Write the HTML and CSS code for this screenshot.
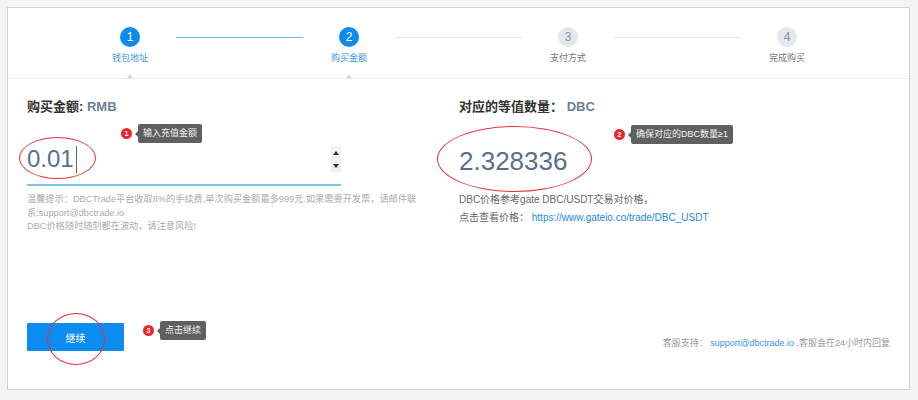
FILE: index.html
```html
<!DOCTYPE html>
<html lang="zh-CN">
<head>
<meta charset="utf-8">
<title>购买金额</title>
<link rel="stylesheet" href="styles.css">
</head>
<body>
<div class="card">
  <div class="steps">
    <div class="step done link-done"><span class="num">1</span><span class="label">钱包地址</span><span class="caret"></span></div>
    <div class="step done link-todo"><span class="num">2</span><span class="label">购买金额</span><span class="caret"></span></div>
    <div class="step todo link-todo"><span class="num">3</span><span class="label">支付方式</span><span class="caret"></span></div>
    <div class="step todo"><span class="num">4</span><span class="label">完成购买</span><span class="caret"></span></div>
  </div>

  <div class="main">
    <div class="cols">
      <div class="col-left">
        <div class="title">购买金额: <span class="unit">RMB</span></div>
        <div class="input-row">
          <span class="value">0.01</span><span class="cursor"></span>
          <span class="spinner"><span class="up"></span><span class="down"></span></span>
        </div>
        <p class="hint">温馨提示：DBCTrade平台收取8%的手续费,单次购买金额最多999元.如果需要开发票，请邮件联系:support@dbctrade.io<br>DBC价格随时随刻都在波动，请注意风险!</p>
      </div>
      <div class="col-right">
        <div class="title">对应的等值数量： <span class="unit">DBC</span></div>
        <div class="amount">2.328336</div>
        <p class="info">DBC价格参考gate DBC/USDT交易对价格，<br>点击查看价格： <a class="link" href="#">https://www.gateio.co/trade/DBC_USDT</a></p>
      </div>
    </div>
    <div class="footer">
      <button class="btn">继续</button>
      <div class="support">客服支持： <a class="link" href="#">support@dbctrade.io</a> ,客服会在24小时内回复</div>
    </div>
  </div>

  <span class="ring ring-1"></span>
  <span class="ring ring-2"></span>
  <span class="ring ring-3"></span>

  <div class="note note-1"><span class="badge">1</span><span class="tip">输入充值金额</span></div>
  <div class="note note-2"><span class="badge">2</span><span class="tip">确保对应的DBC数量≥1</span></div>
  <div class="note note-3"><span class="badge">3</span><span class="tip">点击继续</span></div>
</div>
</body>
</html>
```

FILE: styles.css
```css
html, body {
  margin: 0;
  padding: 0;
}
body {
  background: #f4f4f4;
  padding: 7px;
  font-family: "Liberation Sans", "Noto Sans CJK SC", sans-serif;
  color: #333;
}
.card {
  position: relative;
  width: 903px;
  height: 383px;
  box-sizing: border-box;
  background: #fff;
  border: 1px solid #cfd4dc;
  display: flex;
  flex-direction: column;
}

/* steps */
.steps {
  display: grid;
  grid-template-columns: repeat(4, 1fr);
  padding: 19px 12.5px 0;
  border-bottom: 1px solid #e8ebf0;
}
.step {
  position: relative;
  display: flex;
  flex-direction: column;
  align-items: center;
}
.step .num {
  width: 20px;
  height: 20px;
  border-radius: 50%;
  display: flex;
  align-items: center;
  justify-content: center;
  font-size: 12px;
  line-height: 1;
}
.step .label {
  margin-top: 3px;
  font-size: 9px;
  line-height: 16px;
}
.step .caret {
  margin-top: 8px;
  width: 0;
  height: 0;
  border-left: 3px solid transparent;
  border-right: 3px solid transparent;
  border-bottom: 4px solid #d2d7df;
}
.step.done .num { background: #0b8af0; color: #fff; }
.step.done .label { color: #3d95e6; }
.step.todo .num { background: #e3e7ee; color: #8593a8; }
.step.todo .label { color: #777; }
.step.todo .caret { visibility: hidden; }
.step.link-done::after,
.step.link-todo::after {
  content: "";
  position: absolute;
  top: 10px;
  left: calc(50% + 46px);
  width: 127px;
  height: 1px;
}
.step.link-done::after { background: #72b6ef; }
.step.link-todo::after { background: #e4e7ee; }

/* main */
.main {
  flex: 1;
  display: flex;
  flex-direction: column;
}
.cols {
  display: grid;
  grid-template-columns: 451px 1fr;
  padding-top: 19px;
}
.col-left { padding-left: 19px; }
.title {
  font-size: 13px;
  font-weight: bold;
  line-height: 18px;
  color: #333;
}
.title .unit { color: #6c7f98; }
.input-row {
  width: 314px;
  margin-top: 28px;
  height: 30px;
  padding-bottom: 10px;
  border-bottom: 2px solid #82c3f7;
  display: flex;
  align-items: center;
}
.input-row .value {
  font-size: 24px;
  line-height: 30px;
  color: #587090;
}
.input-row .cursor {
  width: 1px;
  height: 27px;
  margin-left: 2px;
  background: #666;
}
.spinner {
  margin-left: auto;
  width: 10px;
  height: 26px;
  background: #f1f1f1;
  display: flex;
  flex-direction: column;
  align-items: center;
  justify-content: space-around;
}
.spinner .up, .spinner .down {
  width: 0;
  height: 0;
  border-left: 3.5px solid transparent;
  border-right: 3.5px solid transparent;
}
.spinner .up { border-bottom: 4px solid #333; }
.spinner .down { border-top: 4px solid #333; }
.hint {
  margin: 7px 0 0;
  width: 392px;
  font-size: 9.2px;
  line-height: 13.5px;
  color: #ababab;
}
.amount {
  margin-top: 30px;
  font-size: 26px;
  line-height: 30px;
  color: #5a6f8c;
}
.info {
  margin: 15px 0 0;
  font-size: 10px;
  line-height: 18px;
  color: #666;
}
.link {
  color: #1c88e6;
  text-decoration: none;
}

/* footer */
.footer {
  margin-top: auto;
  display: flex;
  justify-content: space-between;
  align-items: flex-end;
  padding: 0 19px 38px;
}
.btn {
  width: 97px;
  height: 28px;
  border: none;
  border-radius: 1px;
  background: #0c8bf1;
  color: #fff;
  font-family: inherit;
  font-size: 10px;
  padding: 0;
}
.support {
  font-size: 9px;
  line-height: 16px;
  color: #999;
}
.support .link { color: #3a93e8; }

/* annotations */
.ring {
  position: absolute;
  box-sizing: border-box;
  border: 1.5px solid #e3343a;
  border-radius: 50%;
}
.ring-1 { left: 11px; top: 129px; width: 77px; height: 42px; }
.ring-2 { left: 429px; top: 118px; width: 155px; height: 66px; }
.ring-3 { left: 39px; top: 305px; width: 58px; height: 52px; }

.note {
  position: absolute;
  display: flex;
  align-items: center;
  gap: 6px;
}
.note-1 { left: 113px; top: 116px; }
.note-2 { left: 606px; top: 117px; }
.note-3 { left: 135px; top: 313px; }
.badge {
  width: 11px;
  height: 11px;
  border-radius: 50%;
  background: #e8262b;
  color: #fff;
  font-size: 7px;
  font-weight: bold;
  display: flex;
  align-items: center;
  justify-content: center;
  line-height: 1;
}
.tip {
  position: relative;
  height: 19px;
  padding: 0 5px;
  background: #606060;
  border-radius: 2px;
  color: #f2f2f2;
  font-size: 9px;
  line-height: 19px;
  white-space: nowrap;
}
.tip::before {
  content: "";
  position: absolute;
  left: -3px;
  top: 6.5px;
  border-top: 3px solid transparent;
  border-bottom: 3px solid transparent;
  border-right: 3px solid #606060;
}
```
